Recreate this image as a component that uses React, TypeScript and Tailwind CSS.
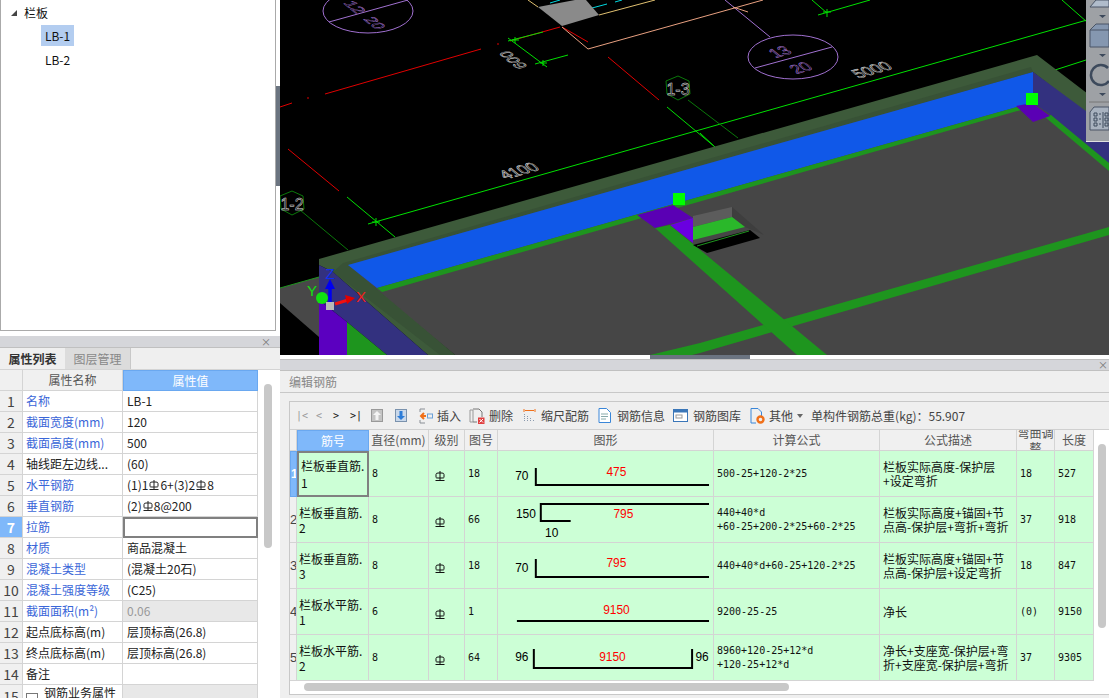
import React from "react";

const Gang = ({ className = "" }: { className?: string }) => (
  <svg viewBox="0 0 10 10" className={`inline-block w-[10px] h-[10px] ${className}`} fill="none" stroke="currentColor" strokeWidth="1">
    <path d="M5 0V9.5M1 6.5V3.5Q1 2 3 2H7Q9 2 9 3.5V6.5Q9 7 7 7H3Q1 7 1 6.5ZM0.5 9.5H9.5" />
  </svg>
);

const CadText = ({ m, s = 14, w = 0.45, children }: { m: string; s?: number; w?: number; children: React.ReactNode }) => (
  <text
    x={0}
    y={0}
    textAnchor="middle"
    dominantBaseline="central"
    transform={`matrix(${m})`}
    fontFamily="Liberation Sans, sans-serif"
    fontSize={s}
    fill="none"
    stroke="currentColor"
    strokeWidth={w}
  >
    {children}
  </text>
);

function Cad() {
  return (
    <svg viewBox="280 0 829 355" className="block w-[829px] h-[355px] bg-black">
      {/* far lines */}
      <g fill="none" strokeWidth="1">
        <g stroke="#e00000">
          <path d="M325 94L481 49M280 107L292 103M288 149L339 191M608 57L659 100M510 41L560 27M562 27L588 42" />
          <path d="M307 98h2M497 44h2" />
        </g>
        <g stroke="#00e000">
          <path d="M368 224L1087 20M347 197L395 237M667 107L715 147M508 38L547 67M508 41L543 32M535 64L568 55" />
          <path d="M376 218v8M372 222h8M515 37v6M512 40h7M543 60v6M540 63h7M812 0L827 13M818 15L870 0M823 12h8M827 9v8M1062 0L1087 22M1055 70L1086 60M700 133L715 147" />
        </g>
        <g stroke="#0a780a">
          <path d="M300 210L348 250M688 100L738 138" />
          <polygon points="678,76 689,81 690,94 678,100 667,94 666,81" />
          <polygon points="292,191 303,196 304,209 292,215 281,209 280,196" />
        </g>
        <g stroke="#a070d0">
          <ellipse cx="368" cy="11" rx="45" ry="22" />
          <path d="M329 22L408 0M725 0L770 37" />
          <ellipse cx="793" cy="57" rx="45" ry="22" />
          <path d="M755 68L832 47" />
        </g>
        <path d="M528 0L538 7M599 15L655 0" stroke="#e0c070" />
        <path d="M562 27L588 49L763 0M733 7L748 12" stroke="#e8a080" />
        <path d="M592 8L607 4M615 2L622 0M550 3L560 0" stroke="#00d8e0" />
      </g>
      <polygon points="538,7 575,0 586,0 599,15 562,26" fill="#8a8a8a" />
      <g className="text-[#e8e8e8]">
        <CadText m="1.12,-0.32,0.92,0.77,519,171">4100</CadText>
        <CadText m="1.12,-0.32,0.92,0.77,872,70">5000</CadText>
        <CadText m="-0.85,-0.7,1.05,-0.3,513,60">600</CadText>
        <CadText m="1,0,0,1,678,89" s={16}>1-3</CadText>
        <CadText m="1,0,0,1,292,204" s={16}>1-2</CadText>
      </g>
      <g className="text-[#a878d8]">
        <CadText m="0.85,0.7,-1.05,0.3,355,7">12</CadText>
        <CadText m="0.85,0.7,-1.05,0.3,375,23">20</CadText>
        <CadText m="1.12,-0.32,0.92,0.77,780,52">13</CadText>
        <CadText m="1.12,-0.32,0.92,0.77,801,68">20</CadText>
      </g>

      {/* left outer slab */}
      <polygon points="280,288 319,277 319,337 280,303" fill="#484848" />
      <path d="M280 288L319 277" stroke="#1e951e" strokeWidth="1" />

      {/* main slab */}
      <polygon points="343,263 1033,72 1109,128 1109,355 455,355" fill="#464646" />

      {/* rim */}
      <polygon points="319,259 1037,55 1109,110 1109,130 1033,72 348,265 455,355 428,355 333,272 319,265" fill="#3d5a3a" />
      <polygon points="333,272 343,263 1031,67 1033,72 348,265 455,355 440,355" fill="#385236" />
      {/* blue */}
      <polygon points="348,265 1033,72 1033,103 1017,107 377,288" fill="#1058e8" />
      <polygon points="377,288 1017,107 1021,110 382,292" fill="#1e951e" />
      {/* indigo */}
      <polygon points="319,265 333,272 428,355 387,355 347,322 319,300" fill="#33317f" />
      <polygon points="1033,72 1109,128 1109,165 1051,115 1033,103" fill="#33317f" />
      <polygon points="319,300 347,322 347,355 319,355" fill="#5b00c0" />
      <polygon points="347,322 387,355 347,355" fill="#1e951e" />
      <polygon points="1045,117 1051,115 1109,163 1109,171" fill="#1e951e" />

      {/* beams */}
      <polygon points="1109,227 1109,235 700,353 692,355 650,355 700,343" fill="#1e951e" />
      <polygon points="655,228 670,225 827,355 797,355" fill="#1e951e" />

      {/* recess */}
      <polygon points="732,207 764,235 745,227 732,217" fill="#3e3e3e" />
      <polygon points="693,216 732,207 732,217 693,227" fill="#5c5c5c" />
      <polygon points="693,227 732,217 745,227 693,240" fill="#2ab82a" />
      <polygon points="693,245 750,230 760,238 707,253" fill="#000000" />
      <path d="M697 246L749 231" stroke="#1e951e" />

      {/* columns */}
      <polygon points="637,215 673,205 693,218 655,228" fill="#5a00b4" />
      <polygon points="670,225 693,218 693,243" fill="#6a00e0" />
      <polygon points="1016,106 1032,103 1050,116 1033,122" fill="#5a00b4" />
      <rect x="673" y="193" width="12" height="12" fill="#00ff00" />
      <rect x="1026" y="93" width="12" height="12" fill="#00ff00" />

      {/* gizmo */}
      <circle cx="322" cy="298" r="6" fill="#10e010" />
      <path d="M330 305V288" stroke="#0000f0" strokeWidth="3.5" />
      <polygon points="330,279 335,289 325,289" fill="#0000f0" />
      <path d="M335 304L348 300" stroke="#f01010" strokeWidth="3" />
      <polygon points="355,298 345,295 347,304" fill="#e00000" />
      <rect x="326" y="302" width="8" height="8" fill="#b8b8b8" />
      <text x="330" y="279" textAnchor="middle" fontSize="15" fontFamily="Liberation Sans, sans-serif" fill="#1030f0">Z</text>
      <text x="361" y="302" textAnchor="middle" fontSize="15" fontFamily="Liberation Sans, sans-serif" fill="#f02020">X</text>
      <text x="312" y="296" textAnchor="middle" fontSize="15" fontFamily="Liberation Sans, sans-serif" fill="#10e010">Y</text>
    </svg>
  );
}

function ViewBar() {
  return (
    <div className="absolute right-0 top-0 w-[23px] h-[142px] bg-[#9ea1a5] border-b border-[#e0e0e0]">
      <svg viewBox="0 0 23 142" className="block w-[23px] h-[142px]" fill="none">
        <path d="M4 7L10 0H23V7Z" fill="#b0bccb" stroke="#4a5566" />
        <path d="M13 15h7l-3.5 3z M13 54h7l-3.5 3z M13 93h7l-3.5 3z" fill="#3d4a5c" />
        <path d="M4 30L10 24H23V47H4Z" fill="#8597b0" stroke="#4a5566" />
        <path d="M4 30H23" stroke="#4a5566" />
        <path d="M22 68A10 10 0 1 0 23 81" stroke="#3d4a5c" strokeWidth="2.5" />
        <path d="M3 102H23" stroke="#777" />
        <path d="M4 130V112L8 107H23V130Z" fill="#a8b2bf" stroke="#4a5566" />
        <path d="M8 113h3v3h-3zM8 118h3v3h-3zM8 123h3v3h-3zM13 114h2M13 119h2M13 124h2M19 113h3v3h-3zM19 118h3v3h-3zM19 123h3v3h-3zM17 112v16" stroke="#3d4a5c" />
      </svg>
    </div>
  );
}

type PropRow = { n: string; v?: React.ReactNode; blue?: boolean; active?: boolean; grey?: boolean };
const propRows: PropRow[] = [
  { n: "名称", v: "LB-1", blue: true },
  { n: "截面宽度(mm)", v: "120", blue: true },
  { n: "截面高度(mm)", v: "500", blue: true },
  { n: "轴线距左边线...", v: "(60)" },
  { n: "水平钢筋", v: <>(1)1<Gang className="mx-[1px] -translate-y-[2px]" />6+(3)2<Gang className="mx-[1px] -translate-y-[2px]" />8</>, blue: true },
  { n: "垂直钢筋", v: <>(2)<Gang className="mx-[1px] -translate-y-[2px]" />8@200</>, blue: true },
  { n: "拉筋", v: "", blue: true, active: true },
  { n: "材质", v: "商品混凝土", blue: true },
  { n: "混凝土类型", v: "(混凝土20石)", blue: true },
  { n: "混凝土强度等级", v: "(C25)", blue: true },
  { n: "截面面积(m²)", v: "0.06", blue: true, grey: true },
  { n: "起点底标高(m)", v: "层顶标高(26.8)" },
  { n: "终点底标高(m)", v: "层顶标高(26.8)" },
  { n: "备注", v: "" },
];

function PropTable() {
  return (
    <table className="table-fixed border-separate border-spacing-0 w-[258px] text-[12px] leading-[14px] bg-white">
      <colgroup>
        <col className="w-[23px]" />
        <col className="w-[100px]" />
        <col className="w-[135px]" />
      </colgroup>
      <thead>
        <tr className="h-[21px]">
          <th className="bg-[#f0f0f0] border-r border-b border-[#d4d4d4] p-0"></th>
          <th className="bg-[#f0f0f0] border-r border-b border-[#d4d4d4] p-0 font-normal text-[#555]">属性名称</th>
          <th className="bg-[#7fb8fa] border border-[#6aa8f0] p-0 font-normal text-white">属性值</th>
        </tr>
      </thead>
      <tbody>
        {propRows.map((r, i) => (
          <tr key={i} className="h-[21px]">
            <td className={`border-r border-b border-[#d4d4d4] p-0 text-center text-[14px] ${r.active ? "bg-[#7fb8fa] text-white font-bold" : "bg-[#f0f0f0] text-[#444]"}`}>{i + 1}</td>
            <td className={`border-r border-b border-[#d4d4d4] pl-[3px] p-0 whitespace-nowrap overflow-hidden ${r.blue ? "text-[#3a66d8]" : "text-[#222]"}`}>{r.n}</td>
            <td className={`pl-[4px] p-0 whitespace-nowrap overflow-hidden ${r.active ? "border-2 border-[#808080]" : "border-r border-b border-[#d4d4d4]"} ${r.grey ? "bg-[#e8e8e8] text-[#999]" : "text-[#222]"}`}>{r.v}</td>
          </tr>
        ))}
        <tr className="h-[21px]">
          <td className="border-r border-[#d4d4d4] bg-[#f0f0f0] p-0 text-center text-[14px] text-[#444]">15</td>
          <td className="border-r border-[#d4d4d4] pl-[3px] p-0 whitespace-nowrap overflow-hidden text-[#222]">
            <span className="inline-flex items-center justify-center w-[12px] h-[12px] border border-[#777] mr-[6px] align-[-2px]">
              <span className="block w-[6px] h-[1px] bg-[#333]"></span>
            </span>
            钢筋业务属性
          </td>
          <td className="border-r border-[#d4d4d4] bg-[#e8e8e8] p-0"></td>
        </tr>
      </tbody>
    </table>
  );
}

type Bar = {
  id: string;
  sub: string;
  d: string;
  no: string;
  shape: React.ReactNode;
  f: string[];
  desc: string[];
  bend: string;
  len: string;
};

const num = "font-['Liberation_Sans',sans-serif] text-[12px]";
const T = ({ x, y, red, children }: { x: number; y: number; red?: boolean; children: React.ReactNode }) => (
  <text x={x} y={y} textAnchor="middle" dominantBaseline="central" className={num} fill={red ? "#ff0000" : "#000"}>{children}</text>
);
const Shape = ({ d, children }: { d: string; children: React.ReactNode }) => (
  <svg viewBox="0 0 216 45" className="block w-[215px] h-[45px]">
    <path d={d} fill="none" stroke="#000" strokeWidth="2" />
    {children}
  </svg>
);

const bars: Bar[] = [
  {
    id: "栏板垂直筋.", sub: "1", d: "8", no: "18", bend: "18", len: "527",
    shape: <Shape d="M38 17V34H212"><T x={24} y={25}>70</T><T x={119} y={21} red>475</T></Shape>,
    f: ["500-25+120-2*25"], desc: ["栏板实际高度-保护层", "+设定弯折"],
  },
  {
    id: "栏板垂直筋.", sub: "2", d: "8", no: "66", bend: "37", len: "918",
    shape: <Shape d="M212 7H43V24H73"><T x={28} y={17}>150</T><T x={126} y={17} red>795</T><T x={54} y={36}>10</T></Shape>,
    f: ["440+40*d", "+60-25+200-2*25+60-2*25"], desc: ["栏板实际高度+锚固+节", "点高-保护层+弯折+弯折"],
  },
  {
    id: "栏板垂直筋.", sub: "3", d: "8", no: "18", bend: "18", len: "847",
    shape: <Shape d="M38 16V34H212"><T x={24} y={25}>70</T><T x={119} y={20} red>795</T></Shape>,
    f: ["440+40*d+60-25+120-2*25"], desc: ["栏板实际高度+锚固+节", "点高-保护层+设定弯折"],
  },
  {
    id: "栏板水平筋.", sub: "1", d: "6", no: "1", bend: "(0)", len: "9150",
    shape: <Shape d="M19 32H212"><T x={119} y={21} red>9150</T></Shape>,
    f: ["9200-25-25"], desc: ["净长"],
  },
  {
    id: "栏板水平筋.", sub: "2", d: "8", no: "64", bend: "37", len: "9305",
    shape: <Shape d="M36 14V33H195V14"><T x={24} y={22}>96</T><T x={115} y={22} red>9150</T><T x={205} y={22}>96</T></Shape>,
    f: ["8960+120-25+12*d", "+120-25+12*d"], desc: ["净长+支座宽-保护层+弯", "折+支座宽-保护层+弯折"],
  },
];

const mono = "font-['DejaVu_Sans_Mono',monospace] text-[10px] text-[#111]";
const bd = "border-r border-b border-[#d4d4d4]";
const hd = `bg-[#f0f0f0] ${bd} p-0 font-normal text-[#555] text-[12px] text-center`;

function BarTable() {
  return (
    <table className="table-fixed border-separate border-spacing-0 w-[804px] bg-[#ccffd6] leading-[14px]">
      <colgroup>
        <col className="w-[7px]" />
        <col className="w-[72px]" />
        <col className="w-[60px]" />
        <col className="w-[36px]" />
        <col className="w-[33px]" />
        <col className="w-[216px]" />
        <col className="w-[166px]" />
        <col className="w-[137px]" />
        <col className="w-[38px]" />
        <col className="w-[39px]" />
      </colgroup>
      <thead>
        <tr className="h-[21px]">
          <th className={hd}></th>
          <th className="bg-[#7fb8fa] border border-[#6aa8f0] p-0 font-normal text-white text-[12px] text-center">筋号</th>
          <th className={hd}>直径(mm)</th>
          <th className={hd}>级别</th>
          <th className={hd}>图号</th>
          <th className={hd}>图形</th>
          <th className={hd}>计算公式</th>
          <th className={hd}>公式描述</th>
          <th className={hd}>
            <div className="h-[20px] overflow-hidden flex items-center justify-center">
              <span className="block leading-[15px] w-[37px] shrink-0">弯曲调整</span>
            </div>
          </th>
          <th className={hd}>长度</th>
        </tr>
      </thead>
      <tbody>
        {bars.map((b, i) => (
          <tr key={i} className="h-[46px]">
            <td className={`p-0 overflow-hidden text-center font-['Liberation_Sans',sans-serif] ${i === 0 ? "bg-[#7fb8fa] text-white font-bold text-[12px] border border-[#6aa8f0]" : `bg-[#f0f0f0] text-[#444] text-[13px] ${bd}`}`}>{i + 1}</td>
            <td className={`p-0 pl-[2px] align-middle text-[12px] text-[#111] ${i === 0 ? "border-2 border-[#808080] leading-[17px]" : `${bd} leading-[15px]`}`}>
              <div className="whitespace-nowrap">{b.id}</div>
              <div>{b.sub}</div>
            </td>
            <td className={`${bd} p-0 pl-[3px] ${mono}`}>{b.d}</td>
            <td className={`${bd} p-0 pl-[6px] text-[#111]`}><Gang className="block" /></td>
            <td className={`${bd} p-0 pl-[3px] ${mono}`}>{b.no}</td>
            <td className={`${bd} p-0`}>{b.shape}</td>
            <td className={`${bd} p-0 pl-[3px] ${mono}`}>
              {b.f.map((l) => <div key={l} className="whitespace-nowrap">{l}</div>)}
            </td>
            <td className={`${bd} p-0 pl-[3px] text-[12px] text-[#111]`}>
              {b.desc.map((l) => <div key={l} className="whitespace-nowrap">{l}</div>)}
            </td>
            <td className={`${bd} p-0 pl-[3px] ${mono}`}>{b.bend}</td>
            <td className={`${bd} p-0 pl-[3px] ${mono}`}>{b.len}</td>
          </tr>
        ))}
      </tbody>
    </table>
  );
}

function Toolbar() {
  return (
    <div className="h-[28px] flex items-center text-[12px] text-[#444] border-b border-[#d0d0d0] bg-[#efefef] whitespace-nowrap">
      <span className={`ml-[6px] w-[20px] ${mono} !text-[#999]`}>|&lt;</span>
      <span className={`w-[17px] ${mono} !text-[#999]`}>&lt;</span>
      <span className={`w-[17px] ${mono}`}>&gt;</span>
      <span className={`w-[21px] ${mono}`}>&gt;|</span>
      <svg viewBox="0 0 12 13" className="w-[12px] h-[13px]">
        <rect x="0.5" y="0.5" width="11" height="12" fill="#c4c4c4" stroke="#999" />
        <path d="M6 2L10 6H7.5V11H4.5V6H2Z" fill="#f4f4f4" />
      </svg>
      <svg viewBox="0 0 12 13" className="ml-[12px] w-[12px] h-[13px]">
        <rect x="0.5" y="0.5" width="11" height="12" fill="#c9d8ea" stroke="#7a92ad" />
        <path d="M6 11L10 7H7.5V2H4.5V7H2Z" fill="#2a7bd8" />
      </svg>
      <svg viewBox="0 0 14 16" className="ml-[12px] w-[14px] h-[16px]" fill="none">
        <path d="M6 1H1V4M6 15H1V12" stroke="#8a8f96" />
        <path d="M7 8H2M5 5L2 8L5 11" stroke="#f0701a" strokeWidth="2" />
        <rect x="8.5" y="6" width="5" height="4" stroke="#6aa0d8" />
      </svg>
      <span className="ml-[4px]">插入</span>
      <svg viewBox="0 0 16 16" className="ml-[8px] w-[16px] h-[16px]" fill="none">
        <path d="M1 2H4V14H1Z" stroke="#999" />
        <path d="M4 1H10L13 4V9M4 14H8" stroke="#777" />
        <rect x="9" y="9.5" width="6.5" height="6.5" fill="#e04040" />
        <path d="M10.5 11L14 14.5M14 11L10.5 14.5" stroke="#fff" />
      </svg>
      <span className="ml-[4px]">删除</span>
      <svg viewBox="0 0 13 15" className="ml-[10px] w-[13px] h-[15px]" fill="none">
        <path d="M1 1V4M12 1V4M2 2.5H11" stroke="#f0701a" />
        <path d="M1.5 6V14M4.5 8V14M7.5 10V14M10.5 12V14" stroke="#8a9aae" strokeDasharray="1 1" />
      </svg>
      <span className="ml-[5px]">缩尺配筋</span>
      <svg viewBox="0 0 13 15" className="ml-[9px] w-[13px] h-[15px]" fill="none">
        <path d="M1 0.5H8.5L12.5 4.5V14.5H1Z" fill="#fff" stroke="#3a86d8" />
        <path d="M3 6H10M3 8.5H10M3 11H8" stroke="#8aa" />
      </svg>
      <span className="ml-[6px]">钢筋信息</span>
      <svg viewBox="0 0 15 13" className="ml-[8px] w-[15px] h-[13px]" fill="none">
        <rect x="0.5" y="0.5" width="14" height="12" fill="#fff" stroke="#3a76b8" />
        <rect x="1" y="1" width="13" height="2.5" fill="#3a76b8" />
        <rect x="3" y="6" width="6" height="3" stroke="#999" />
      </svg>
      <span className="ml-[5px]">钢筋图库</span>
      <svg viewBox="0 0 15 16" className="ml-[9px] w-[15px] h-[16px]" fill="none">
        <path d="M1 0.5H8L11.5 4V9M1 0.5V15H6" stroke="#3a86d8" />
        <circle cx="10.5" cy="11.5" r="3" stroke="#f0701a" strokeWidth="2.4" />
      </svg>
      <span className="ml-[4px]">其他</span>
      <svg viewBox="0 0 6 4" className="ml-[4px] w-[6px] h-[4px]"><path d="M0 0H6L3 4Z" fill="#666" /></svg>
      <span className="ml-[8px]">单构件钢筋总重(kg)：55.907</span>
    </div>
  );
}

export default function App() {
  return (
    <div className="w-[1109px] h-[698px] overflow-hidden flex bg-[#efefef] font-['Noto_Sans_CJK_SC','Liberation_Sans',sans-serif]">
      {/* left column */}
      <div className="w-[280px] shrink-0 flex flex-col">
        <div className="h-[331px] flex bg-white">
          <div className="w-[276px] border-l border-r border-b border-[#aaaaaa] text-[12px] text-[#111] pt-[2px]">
            <div className="h-[22px] flex items-center pl-[10px]">
              <svg viewBox="0 0 6 6" className="w-[6px] h-[6px]"><path d="M6 0V6H0Z" fill="#444" /></svg>
              <span className="ml-[7px]">栏板</span>
            </div>
            <div className="pl-[40px]">
              <div className="w-[33px] h-[21px] bg-[#b3cdf0] flex items-center justify-center mt-[1px]">LB-1</div>
              <div className="w-[33px] h-[21px] flex items-center justify-center mt-[3px]">LB-2</div>
            </div>
          </div>
          <div className="w-[4px] pt-[86px]">
            <div className="h-[100px] bg-[#6b7480]"></div>
          </div>
        </div>
        <div className="h-[5px] bg-white"></div>
        <div className="h-[12px] bg-[#d5d6da] border-b border-[#c0c0c0] flex items-center justify-end pr-[9px] text-[10px] leading-none text-[#777]">×</div>
        <div className="h-[22px] flex text-[12px] border-b border-[#d4d4d4]">
          <div className="w-[65px] flex items-center justify-center font-bold text-[#333]">属性列表</div>
          <div className="w-[66px] flex items-center justify-center bg-[#dcdcdc] text-[#888] border-r border-[#c8c8c8]">图层管理</div>
        </div>
        <div className="flex-1 flex bg-white overflow-hidden">
          <PropTable />
          <div className="w-[22px] pl-[6px] pt-[14px]">
            <div className="w-[8px] h-[164px] rounded-[4px] bg-[#c8c8c8]"></div>
          </div>
        </div>
      </div>

      {/* right column */}
      <div className="flex-1 flex flex-col min-w-0">
        <div className="relative h-[355px]">
          <Cad />
          <ViewBar />
        </div>
        <div className="h-[4px] bg-white pl-[370px]">
          <div className="w-[100px] h-[4px] bg-[#6b7480]"></div>
        </div>
        <div className="h-[12px] bg-[#d5d6da] border-t border-b border-[#c0c0c0] flex items-center justify-end pr-[1px] text-[10px] leading-none text-[#777]">×</div>
        <div className="h-[22px] pl-[9px] flex items-center text-[12px] text-[#888] border-b border-[#c8c8c8]">编辑钢筋</div>
        <div className="pt-[8px] pl-[9px]">
          <div className="border-l border-t border-b border-[#c8c8c8] h-[294px] flex flex-col bg-white">
            <Toolbar />
            <div className="flex h-[251px]">
              <BarTable />
              <div className="w-[15px] pl-[4px] pt-[14px]">
                <div className="w-[8px] h-[184px] rounded-[4px] bg-[#c8c8c8]"></div>
              </div>
            </div>
            <div className="pl-[14px] pt-[2px]">
              <div className="w-[485px] h-[8px] rounded-[4px] bg-[#c8c8c8]"></div>
            </div>
          </div>
        </div>
      </div>
    </div>
  );
}
